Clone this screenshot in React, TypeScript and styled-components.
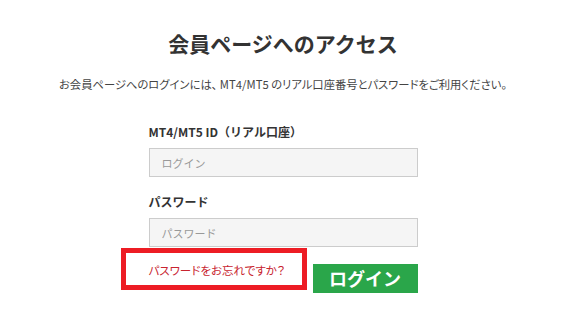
import React from "react";
import styled, { createGlobalStyle } from "styled-components";

const Global = createGlobalStyle`
  html, body { margin: 0; padding: 0; background: #fff; }
  body { font-family: "Noto Sans CJK JP", "Noto Sans", sans-serif; color: #333; }
`;

const Page = styled.div`
  width: 566px;
  display: flex;
  flex-direction: column;
  align-items: center;
  padding-top: 28px;
`;

const Title = styled.h1`
  margin: 0;
  font-size: 21px;
  font-weight: 700;
  line-height: 30px;
  color: #333;
`;

const Lead = styled.p`
  margin: 17px 0 0;
  font-size: 11.3px;
  line-height: 18px;
  color: #444;
  font-feature-settings: "palt";
`;

const Form = styled.form`
  width: 269px;
  margin-top: 30px;
  display: flex;
  flex-direction: column;
`;

const Label = styled.label<{ $gap?: number }>`
  display: block;
  font-size: 12px;
  font-weight: 700;
  line-height: 18px;
  color: #333;
  margin-top: ${(p) => p.$gap ?? 0}px;
  margin-bottom: 7px;
`;

const Input = styled.input`
  box-sizing: border-box;
  width: 269px;
  height: 29px;
  border: 1px solid #ccc;
  background: #f5f5f5;
  padding: 0 12px;
  font-family: inherit;
  font-size: 11px;
  color: #333;
  outline: none;
  &::placeholder { color: #999; }
`;

const Actions = styled.div`
  display: flex;
  justify-content: space-between;
  align-items: flex-start;
  margin-top: 17px;
`;

const Forgot = styled.a`
  position: relative;
  margin-top: -3px;
  font-size: 11.5px;
  line-height: 18px;
  color: #c8242f;
  text-decoration: none;
  font-feature-settings: "palt";
  &::after {
    content: "";
    position: absolute;
    top: -13px;
    bottom: -11px;
    left: -28px;
    right: -22px;
    border: 5px solid #ed1c24;
  }
`;

const Button = styled.button`
  width: 105px;
  height: 29px;
  border: none;
  background: #2aa64a;
  color: #fff;
  font-family: inherit;
  font-size: 18px;
  font-weight: 700;
  padding: 0;
  line-height: 29px;
`;

export default function App() {
  return (
    <>
      <Global />
      <Page>
        <Title>会員ページへのアクセス</Title>
        <Lead>お会員ページへのログインには、 MT4/MT5 のリアル口座番号とパスワードをご利用ください。</Lead>
        <Form onSubmit={(e) => e.preventDefault()}>
          <Label>MT4/MT5 ID（リアル口座）</Label>
          <Input placeholder="ログイン" />
          <Label $gap={16}>パスワード</Label>
          <Input type="password" placeholder="パスワード" />
          <Actions>
            <Forgot href="#">パスワードをお忘れですか？</Forgot>
            <Button type="submit">ログイン</Button>
          </Actions>
        </Form>
      </Page>
    </>
  );
}
